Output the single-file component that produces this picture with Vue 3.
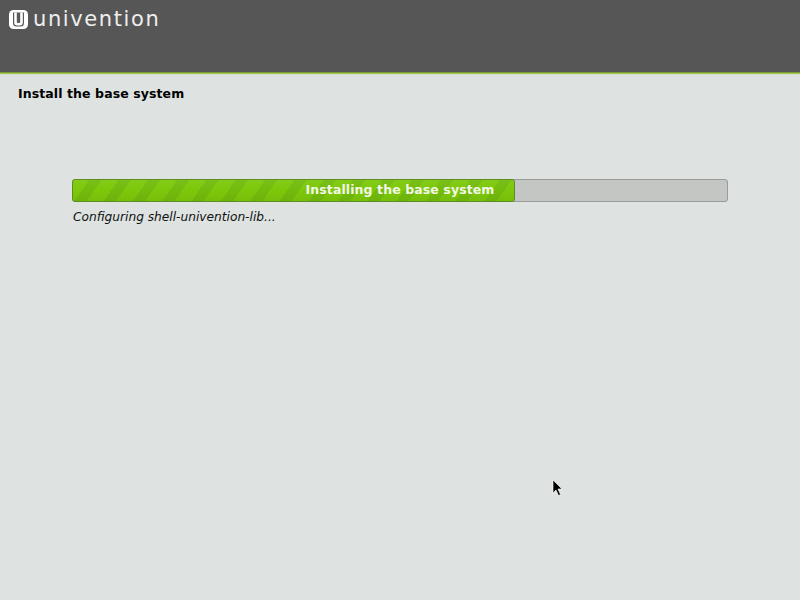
<script setup>
const percent = 67.7
</script>

<template>
  <div class="screen">
    <header class="banner">
      <div class="brand">
        <svg class="logo-mark" width="19" height="19" viewBox="0 0 19 19">
          <rect x="0" y="0" width="19" height="19" rx="4.5" fill="#fff" />
          <path d="M4 2.5h11v10.5a3.5 3.5 0 0 1-3.5 3.5h-4A3.5 3.5 0 0 1 4 13z" fill="#5a5a5a" />
          <path d="M5.2 2.5h2.6v9.5a1 1 0 0 0 1 1h1.4a1 1 0 0 0 1-1V2.5h2.6v10a3 3 0 0 1-3 3H8.2a3 3 0 0 1-3-3z" fill="#fff" />
        </svg>
        <span class="wordmark">univention</span>
      </div>
    </header>
    <main class="content">
      <h1 class="title">Install the base system</h1>
      <section class="progress-area">
        <div class="track">
          <div class="fill" :style="{ width: percent + '%' }"></div>
          <span class="label">Installing the base system</span>
        </div>
        <p class="status">Configuring shell-univention-lib...</p>
      </section>
    </main>
    <svg class="cursor" width="12" height="18" viewBox="0 0 12 18">
      <path d="M1 1v13l3-3 2.5 5.5 2-1L6 10h4z" fill="#000" stroke="#fff" stroke-width="0.6" />
    </svg>
  </div>
</template>

<style>
html, body { margin: 0; background: #dee3e1; }
</style>

<style scoped>
.screen {
  position: relative;
  width: 800px;
  height: 600px;
  overflow: hidden;
  background: #dee3e1;
  font-family: "DejaVu Sans", sans-serif;
  color: #000;
}
.banner {
  box-sizing: border-box;
  height: 75px;
  background: linear-gradient(#565656 0 72px, #7b9b3a 72px 73px, #a2c84f 73px 74px, #d5e0c2 74px);
  padding: 10px 0 0 9px;
}
.brand {
  display: flex;
  align-items: center;
  gap: 5px;
  height: 19px;
}
.logo-mark { flex: none; }
.wordmark {
  color: #eeeeee;
  font-family: "DejaVu Sans", sans-serif;
  font-weight: 400;
  font-size: 21px;
  line-height: 19px;
  letter-spacing: 1.6px;
}
.content { padding: 0 72px; }
.title {
  margin: 10px 0 0 -54px;
  font-size: 12.5px;
  line-height: 18px;
  font-weight: 700;
  letter-spacing: 0.09px;
}
.progress-area { margin-top: 76px; }
.track {
  position: relative;
  box-sizing: border-box;
  height: 23px;
  width: 656px;
  padding-bottom: 2px;
  background: #c3c6c3;
  border: 1px solid #989c99;
  border-radius: 3px;
  display: flex;
  align-items: center;
  justify-content: center;
}
.fill {
  position: absolute;
  top: -1px;
  left: -1px;
  bottom: -1px;
  border: 1px solid #5c8f20;
  border-radius: 3px;
  box-sizing: border-box;
  background:
    linear-gradient(rgba(255,255,255,0.06), rgba(255,255,255,0) 50%, rgba(0,0,0,0.05)),
    repeating-linear-gradient(-55deg, #7cc80a 0 14px, #72bb0c 14px 24px);
}
.label {
  position: relative;
  color: #f2f7e6;
  font-size: 12.5px;
  font-weight: 700;
  letter-spacing: 0.1px;
}
.status {
  margin: 7px 0 0 1px;
  font-size: 12.2px;
  line-height: 17px;
  font-style: oblique;
  color: #111;
}
.cursor {
  position: absolute;
  left: 552px;
  top: 479px;
}
</style>
